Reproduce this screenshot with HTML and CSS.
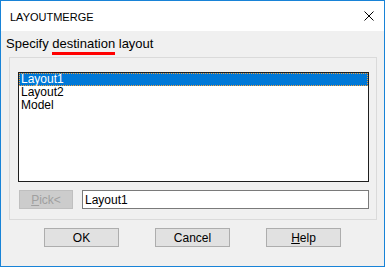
FILE: index.html
```
<!DOCTYPE html>
<html lang="en">
<head>
  <meta charset="UTF-8" />
  <title>LAYOUTMERGE</title>
  <link rel="stylesheet" href="styles.css">
</head>
<body>
  <div class="dialog">
    <div class="titlebar">
      <span class="title">LAYOUTMERGE</span>
      <svg class="close" width="10" height="10" viewBox="0 0 10 10">
        <path d="M0.5 0.5 L9.5 9.5 M9.5 0.5 L0.5 9.5" stroke="#000" stroke-width="1" />
      </svg>
    </div>

    <div class="body">
      <p class="prompt">Specify <span class="mark">destination</span> layout</p>

      <div class="frame">
        <ul class="listbox">
          <li class="item selected">Layout1</li>
          <li class="item">Layout2</li>
          <li class="item">Model</li>
        </ul>
        <div class="pick-row">
          <button class="btn pick" disabled><u>P</u>ick&lt;</button>
          <input class="field" type="text" value="Layout1" />
        </div>
      </div>

      <div class="actions">
        <button class="btn">OK</button>
        <button class="btn">Cancel</button>
        <button class="btn"><u>H</u>elp</button>
      </div>
    </div>
  </div>
</body>
</html>
```

FILE: styles.css
```
* {
  margin: 0;
  padding: 0;
  box-sizing: border-box;
}

body {
  font-family: 'Liberation Sans', Arial, sans-serif;
  font-size: 12px;
  color: #000;
  background: #fff;
}

.dialog {
  width: 385px;
  height: 267px;
  border: 1px solid #1883d7;
  background: #f0f0f0;
  display: flex;
  flex-direction: column;
}

.titlebar {
  height: 30px;
  background: #fff;
  display: flex;
  align-items: center;
  justify-content: space-between;
  padding: 0 10px 0 9px;
}

.title {
  font-size: 11px;
  margin-top: 1px;
}

.close {
  display: block;
  margin-bottom: 1px;
}

.body {
  padding: 5px 7px 0 8px;
}

.prompt {
  font-size: 13px;
  line-height: 15px;
  margin-left: -3px;
  height: 21px;
}

.mark {
  border-bottom: 3px solid #f00;
  padding-bottom: 1px;
}

.frame {
  border: 1px solid #dadada;
  padding: 14px 7px 10px 8px;
}

.listbox {
  list-style: none;
  height: 110px;
  background: #fff;
  border: 1px solid #1e1e1e;
  font-size: 12px;
}

.item {
  height: 13px;
  line-height: 13px;
  padding-left: 2px;
}

.item.selected {
  background: #0078d7;
  color: #fff;
  outline: 1px dotted #f0a040;
  outline-offset: -1px;
}

.pick-row {
  display: flex;
  gap: 9px;
  margin-top: 8px;
  padding-left: 1px;
}

.btn {
  font-family: inherit;
  font-size: 12px;
  width: 75px;
  height: 19px;
  background: #e1e1e1;
  border: 1px solid #adadad;
  color: #000;
}

.btn u {
  text-decoration-thickness: 1px;
}

.pick {
  width: 54px;
  background: #cccccc;
  border-color: #bfbfbf;
  color: #a0a0a0;
}

.field {
  flex: 1;
  height: 19px;
  border: 1px solid #7a7a7a;
  background: #fff;
  font-family: inherit;
  font-size: 12px;
  padding-left: 2px;
  outline: none;
}

.actions {
  display: flex;
  gap: 36px;
  margin-top: 8px;
  padding-left: 35px;
}
```
